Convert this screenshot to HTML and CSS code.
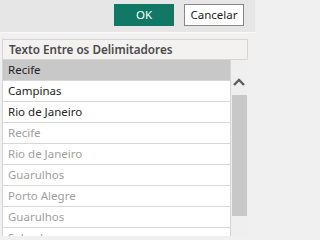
FILE: index.html
```html
<!DOCTYPE html>
<html>
<head>
<meta charset="utf-8">
<link rel="stylesheet" href="styles.css">
</head>
<body>
<div class="page">
  <div class="topbar">
    <button class="btn btn-ok">OK</button>
    <button class="btn btn-cancel">Cancelar</button>
  </div>
  <div class="panel">
    <div class="header">Texto Entre os Delimitadores</div>
    <div class="body">
      <div class="list">
        <div class="row selected">Recife</div>
        <div class="row">Campinas</div>
        <div class="row">Rio de Janeiro</div>
        <div class="row muted">Recife</div>
        <div class="row muted">Rio de Janeiro</div>
        <div class="row muted">Guarulhos</div>
        <div class="row muted">Porto Alegre</div>
        <div class="row muted">Guarulhos</div>
        <div class="row muted">Salvador</div>
      </div>
      <div class="scrollbar">
        <div class="arrow">
          <svg width="12" height="8" viewBox="0 0 12 8"><path d="M1 7 L6 2 L11 7" fill="none" stroke="#5f5f5f" stroke-width="2.4"/></svg>
        </div>
        <div class="thumb"></div>
      </div>
    </div>
  </div>
</div>
</body>
</html>
```
FILE: styles.css
```css
html, body {
  margin: 0;
  padding: 0;
  background: #f0f0f0;
  font-family: "Noto Sans", "Open Sans", sans-serif;
}
.page {
  width: 255px;
  height: 236px;
  overflow: hidden;
  background: #f0f0f0;
}
.topbar {
  height: 33px;
  box-sizing: border-box;
  background: #e6e6e6;
  border-bottom: 1px solid #f8f8f8;
  display: flex;
  justify-content: flex-end;
  align-items: flex-start;
  padding: 4px 11px 0 0;
  gap: 10px;
}
.btn {
  width: 60px;
  height: 22px;
  box-sizing: border-box;
  font-family: inherit;
  font-size: 11.5px;
  padding: 0;
  margin: 0;
  line-height: 20px;
}
.btn-ok {
  background: #117865;
  color: #ffffff;
  border: 1px solid #117865;
}
.btn-cancel {
  background: #ffffff;
  color: #252423;
  border: 1px solid #8a8886;
}
.panel {
  margin: 6px 0 0 2px;
  width: 246px;
}
.header {
  height: 21px;
  box-sizing: border-box;
  border: 1px solid #d6d6d6;
  background: #f3f2f1;
  color: #4a4a4a;
  font-weight: 600;
  font-size: 11.7px;
  line-height: 19px;
  padding-left: 6px;
}
.body {
  display: flex;
}
.list {
  width: 229px;
  box-sizing: border-box;
  border-left: 1px solid #d6d6d6;
  border-right: 1px solid #d6d6d6;
  background: #ffffff;
}
.row {
  height: 21px;
  box-sizing: border-box;
  border-bottom: 1px solid #d8d8d8;
  font-size: 11.5px;
  line-height: 20px;
  padding-left: 5px;
  color: #252423;
}
.row.selected {
  background: #c8c8c8;
}
.row.muted {
  color: #a19f9d;
}
.scrollbar {
  width: 16px;
  background: #efefef;
  display: flex;
  flex-direction: column;
  align-items: center;
}
.arrow {
  height: 35px;
  display: flex;
  align-items: flex-end;
  justify-content: center;
  box-sizing: border-box;
  width: 100%;
}
.arrow svg {
  display: block;
  margin-bottom: 9px;
}
.thumb {
  width: 15px;
  height: 121px;
  background: #c8c8c8;
  align-self: flex-end;
}
```
